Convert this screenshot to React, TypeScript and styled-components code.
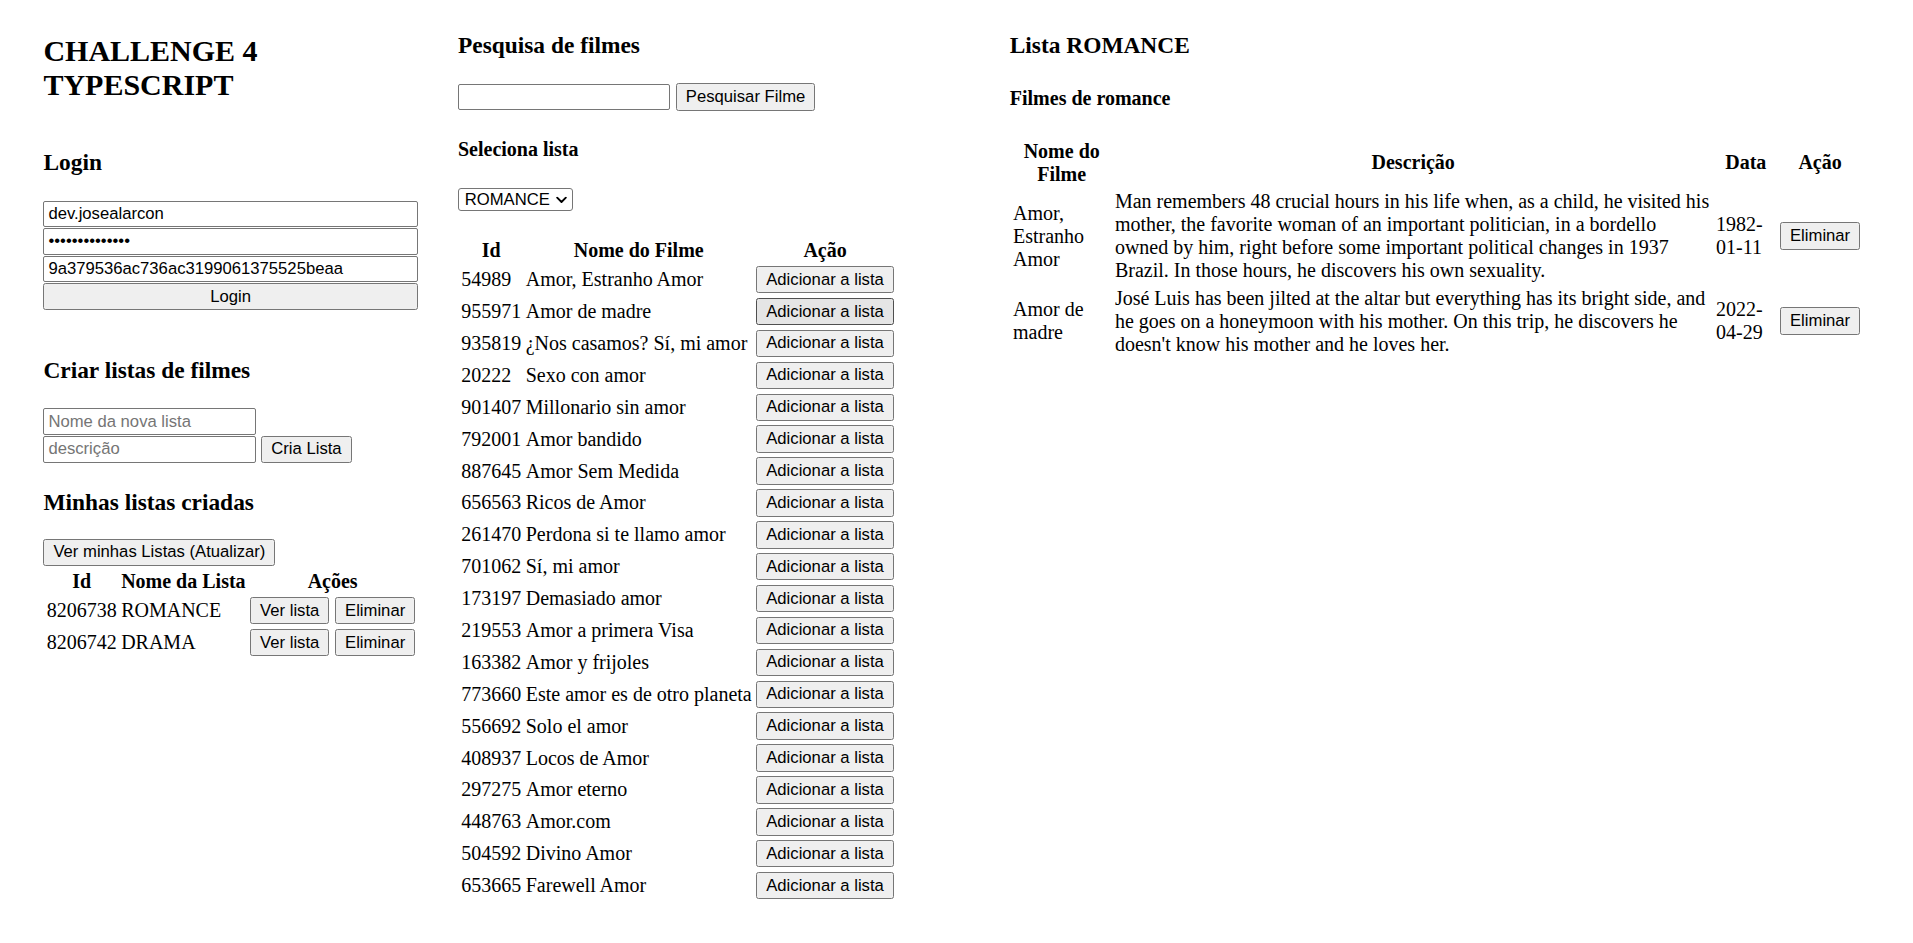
import React from "react";
import styled, { createGlobalStyle, css } from "styled-components";

const GlobalStyle = createGlobalStyle`
  html, body {
    margin: 0;
    padding: 0;
    background: #ffffff;
  }
  body {
    font-family: "Liberation Serif", "Times New Roman", serif;
    font-size: 20px;
    color: #000000;
  }
`;

const controlFont = css`
  font-family: "Liberation Sans", Arial, sans-serif;
  font-size: 16.67px;
  color: #000000;
`;

const Page = styled.div`
  display: flex;
  align-items: flex-start;
  padding-left: 43.4px;
`;

const Panel = styled.section<{ $width: number; $gap?: number }>`
  display: flex;
  flex-direction: column;
  align-items: flex-start;
  flex: none;
  width: ${(p) => p.$width}px;
  margin-left: ${(p) => p.$gap ?? 0}px;
`;

const Title = styled.h1<{ $mt: number }>`
  margin: ${(p) => p.$mt}px 0 0;
  font-size: 30px;
  font-weight: 700;
  line-height: normal;
`;

const Heading = styled.h3<{ $mt: number }>`
  margin: ${(p) => p.$mt}px 0 0;
  font-size: 23.4px;
  font-weight: 700;
  line-height: normal;
`;

const SubHeading = styled.h4<{ $mt: number }>`
  margin: ${(p) => p.$mt}px 0 0;
  font-size: 20px;
  font-weight: 700;
  line-height: normal;
`;

const Stack = styled.div<{ $mt: number; $full?: boolean }>`
  display: flex;
  flex-direction: column;
  align-items: flex-start;
  gap: 1px;
  margin-top: ${(p) => p.$mt}px;
  width: ${(p) => (p.$full ? "100%" : "auto")};
`;

const InlineRow = styled.div<{ $mt?: number }>`
  display: flex;
  align-items: center;
  gap: 5.5px;
  margin-top: ${(p) => p.$mt ?? 0}px;
`;

const TextInput = styled.input<{ $block?: boolean }>`
  box-sizing: border-box;
  display: block;
  width: ${(p) => (p.$block ? "100%" : "212.4px")};
  height: 26.4px;
  margin: 0;
  padding: 0 4px;
  border: 1px solid #767676;
  border-radius: 2px;
  background: #ffffff;
  outline: none;
  ${controlFont}
  &::placeholder {
    color: #757575;
  }
`;

const Button = styled.button<{ $block?: boolean; $hover?: boolean; $mt?: number }>`
  box-sizing: border-box;
  display: ${(p) => (p.$block ? "block" : "inline-block")};
  width: ${(p) => (p.$block ? "100%" : "auto")};
  height: 27.4px;
  margin: ${(p) => p.$mt ?? 0}px 0 0;
  padding: 0 9px;
  border: 1px solid ${(p) => (p.$hover ? "#4f4f4f" : "#767676")};
  border-radius: 2.5px;
  background: ${(p) => (p.$hover ? "#e5e5e5" : "#efefef")};
  white-space: nowrap;
  line-height: normal;
  cursor: default;
  vertical-align: middle;
  ${controlFont}
`;

const SelectWrap = styled.div<{ $mt: number }>`
  position: relative;
  display: inline-block;
  margin-top: ${(p) => p.$mt}px;
`;

const Select = styled.select`
  box-sizing: border-box;
  display: block;
  width: 115px;
  height: 23.4px;
  margin: 0;
  padding: 0 0 0 5.7px;
  border: 1px solid #767676;
  border-radius: 3px;
  background: #ffffff;
  appearance: none;
  -webkit-appearance: none;
  outline: none;
  ${controlFont}
`;

const Chevron = styled.svg`
  position: absolute;
  right: 6px;
  top: 50%;
  width: 11px;
  height: 7px;
  transform: translateY(-50%);
  pointer-events: none;
`;

const Table = styled.table<{ $mt?: number; $nowrap?: boolean }>`
  border-collapse: separate;
  border-spacing: 2.5px;
  margin-top: ${(p) => p.$mt ?? 0}px;
  font-size: 20px;
  line-height: normal;
  flex: none;
  white-space: ${(p) => (p.$nowrap ? "nowrap" : "normal")};
`;

const Th = styled.th<{ $w?: number }>`
  padding: 1.25px;
  font-weight: 700;
  text-align: center;
  vertical-align: middle;
  ${(p) => (p.$w ? `width: ${p.$w}px;` : "")}
`;

const Td = styled.td`
  padding: 1.25px;
  text-align: left;
  vertical-align: middle;
`;

const Actions = styled.div`
  display: flex;
  gap: 5.7px;
`;

const movies: [string, string][] = [
  ["54989", "Amor, Estranho Amor"],
  ["955971", "Amor de madre"],
  ["935819", "¿Nos casamos? Sí, mi amor"],
  ["20222", "Sexo con amor"],
  ["901407", "Millonario sin amor"],
  ["792001", "Amor bandido"],
  ["887645", "Amor Sem Medida"],
  ["656563", "Ricos de Amor"],
  ["261470", "Perdona si te llamo amor"],
  ["701062", "Sí, mi amor"],
  ["173197", "Demasiado amor"],
  ["219553", "Amor a primera Visa"],
  ["163382", "Amor y frijoles"],
  ["773660", "Este amor es de otro planeta"],
  ["556692", "Solo el amor"],
  ["408937", "Locos de Amor"],
  ["297275", "Amor eterno"],
  ["448763", "Amor.com"],
  ["504592", "Divino Amor"],
  ["653665", "Farewell Amor"],
];

const lists: [string, string][] = [
  ["8206738", "ROMANCE"],
  ["8206742", "DRAMA"],
];

const listMovies = [
  {
    name: "Amor, Estranho Amor",
    desc:
      "Man remembers 48 crucial hours in his life when, as a child, he visited his mother, the favorite woman of an important politician, in a bordello owned by him, right before some important political changes in 1937 Brazil. In those hours, he discovers his own sexuality.",
    date: "1982-01-11",
  },
  {
    name: "Amor de madre",
    desc:
      "José Luis has been jilted at the altar but everything has its bright side, and he goes on a honeymoon with his mother. On this trip, he discovers he doesn't know his mother and he loves her.",
    date: "2022-04-29",
  },
];

export default function App() {
  return (
    <>
      <GlobalStyle />
      <Page>
        <Panel $width={374.4}>
          <Title $mt={34}>CHALLENGE 4 TYPESCRIPT</Title>
          <Heading $mt={47.3}>Login</Heading>
          <Stack $mt={24.6} $full>
            <TextInput $block defaultValue="dev.josealarcon" />
            <TextInput $block type="password" defaultValue="abcdefghijklmn" />
            <TextInput $block defaultValue="9a379536ac736ac3199061375525beaa" />
            <Button $block>Login</Button>
          </Stack>

          <Heading $mt={47}>Criar listas de filmes</Heading>
          <Stack $mt={23.9}>
            <TextInput placeholder="Nome da nova lista" />
            <InlineRow>
              <TextInput placeholder="descrição" />
              <Button>Cria Lista</Button>
            </InlineRow>
          </Stack>

          <Heading $mt={25.4}>Minhas listas criadas</Heading>
          <Button $mt={23.2}>Ver minhas Listas (Atualizar)</Button>
          <Table $mt={0.2} $nowrap>
            <thead>
              <tr>
                <Th>Id</Th>
                <Th>Nome da Lista</Th>
                <Th>Ações</Th>
              </tr>
            </thead>
            <tbody>
              {lists.map(([id, name]) => (
                <tr key={id}>
                  <Td>{id}</Td>
                  <Td>{name}</Td>
                  <Td>
                    <Actions>
                      <Button>Ver lista</Button>
                      <Button>Eliminar</Button>
                    </Actions>
                  </Td>
                </tr>
              ))}
            </tbody>
          </Table>
        </Panel>

        <Panel $width={551.8} $gap={40.2}>
          <Heading $mt={31.5}>Pesquisa de filmes</Heading>
          <InlineRow $mt={24.9}>
            <TextInput />
            <Button>Pesquisar Filme</Button>
          </InlineRow>
          <SubHeading $mt={26.8}>Seleciona lista</SubHeading>
          <SelectWrap $mt={27.4}>
            <Select defaultValue="ROMANCE">
              <option value="ROMANCE">ROMANCE</option>
              <option value="DRAMA">DRAMA</option>
            </Select>
            <Chevron viewBox="0 0 11 7" fill="none">
              <path d="M1.2 1.2 L5.5 5.5 L9.8 1.2" stroke="#000" strokeWidth="1.9" strokeLinecap="round" strokeLinejoin="round" />
            </Chevron>
          </SelectWrap>
          <Table $mt={23.9}>
            <thead>
              <tr>
                <Th>Id</Th>
                <Th>Nome do Filme</Th>
                <Th>Ação</Th>
              </tr>
            </thead>
            <tbody>
              {movies.map(([id, name], i) => (
                <tr key={id}>
                  <Td>{id}</Td>
                  <Td>{name}</Td>
                  <Td>
                    <Button $hover={i === 1}>Adicionar a lista</Button>
                  </Td>
                </tr>
              ))}
            </tbody>
          </Table>
        </Panel>

        <Panel $width={864.2}>
          <Heading $mt={31.5}>Lista ROMANCE</Heading>
          <SubHeading $mt={28.3}>Filmes de romance</SubHeading>
          <Table $mt={26.6}>
            <thead>
              <tr>
                <Th $w={97.4}>Nome do Filme</Th>
                <Th $w={596.6}>Descrição</Th>
                <Th $w={59.5}>Data</Th>
                <Th>Ação</Th>
              </tr>
            </thead>
            <tbody>
              {listMovies.map((m) => (
                <tr key={m.name}>
                  <Td>{m.name}</Td>
                  <Td>{m.desc}</Td>
                  <Td>{m.date}</Td>
                  <Td>
                    <Button>Eliminar</Button>
                  </Td>
                </tr>
              ))}
            </tbody>
          </Table>
        </Panel>
      </Page>
    </>
  );
}
